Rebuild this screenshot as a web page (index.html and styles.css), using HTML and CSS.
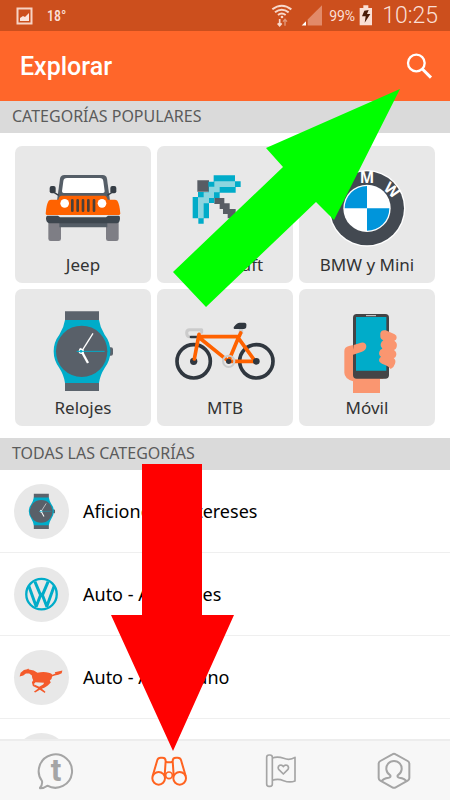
FILE: index.html
```
<!DOCTYPE html>
<html lang="es">
<head>
<meta charset="utf-8">
<meta name="viewport" content="width=device-width, initial-scale=1">
<title>Explorar</title>
<link rel="stylesheet" href="styles.css">
</head>
<body>
<div class="app">
  <div class="status">
    <svg class="status-photo" viewBox="0 0 17 18"><path d="M1.500 1.500h14v15h-14z" fill="none" stroke="#f7d3c5" stroke-width="2"/><path d="M4 14v-3l3-2 2 1 4-4v8z" fill="#fbe4dc"/></svg>
    <span class="temp">18°</span>
    <span class="spacer"></span>
    <svg class="status-icon" viewBox="144 9 66 69" fill="none" stroke="#f8d8cb" stroke-width="6"><path d="M148 25q28-22 57 0M156 34q20-16 41 0M165 42q11-9 23 0"/><circle cx="177" cy="48" r="4" fill="#f8d8cb" stroke="none"/><path d="M170 54v20M164 67l6 7 6-7" stroke-width="5"/><path d="M186 74V55m-6 7 6-7 6 7" stroke="#e39a7c" stroke-width="4"/></svg>
    <svg class="status-icon signal" viewBox="234 12 66 66"><path d="M297 14v61h-43V57z" fill="#e28a69"/><path d="M249 62v13h-13z" fill="#fff"/></svg>
    <span class="percent">99%</span>
    <svg class="battery" viewBox="411 13 42 63"><path d="M424 14h15v8h11v52h-37V22h11z" fill="#fadfd5"/><path d="m427 30 13-2-5 12h10l-17 26 3-19h-11z" fill="#4a1b08"/></svg>
    <time class="clock">10:25</time>
  </div>
  <header class="bar">
    <h1>Explorar</h1>
    <button class="search" aria-label="Buscar"><svg viewBox="540 153 90 90" fill="none" stroke="#fff"><circle cx="574" cy="189" r="25" stroke-width="7"/><path d="m592 207 26 26" stroke-width="9"/></svg></button>
  </header>
  <main class="content">
    <h2>CATEGORÍAS POPULARES</h2>
    <div class="grid">
      <a class="tile" href="#">
        <svg viewBox="45 18 408 318">
          <rect x="145" y="235" width="38" height="68" rx="7" fill="#7e7e85"/><rect x="318" y="235" width="38" height="68" rx="7" fill="#7e7e85"/>
          <path d="M178 245h144v17H178z" fill="#545d66"/>
          <path d="M171 182l9-66q2-11 13-11h115q11 0 13 11l9 66z" fill="#555e67"/>
          <path d="M186 154l4-30q1-10 11-10h98q10 0 11 10l4 30q0 5-5 5H191q-5 0-5-5z" fill="#fff"/>
          <rect x="149" y="138" width="18" height="22" rx="6" fill="#353d45"/><rect x="331" y="138" width="18" height="22" rx="6" fill="#353d45"/><path d="M163 158l13 8M335 158l-13 8" stroke="#353d45" stroke-width="4"/>
          <path d="M137 221q2-28 9-39 3-3 8-3h21q3-12 10-12h128q7 0 10 12h21q5 0 8 3 7 11 9 39-1 4-5 4H142q-5 0-5-4z" fill="#ff6200"/>
          <circle cx="194" cy="190" r="13" fill="#fff"/><circle cx="306" cy="190" r="13" fill="#fff"/>
          <path d="M217 181v31M233 181v31M249 181v31M265 181v31M282 181v31" stroke="#4c4038" stroke-width="8" stroke-linecap="round"/>
          <path d="M142 227h32l6 5h138l6-5h32q4 0 4 7 0 14-9 16H147q-9-3-9-15 0-8 4-8z" fill="#3d464e"/>
        </svg>
        <span>Jeep</span>
      </a>
      <a class="tile" href="#">
        <svg viewBox="6 18 408 318">
          <path d="M127 121h35v34h-35zM178 174h30v16h16v17h18v28h-24v-13h-14v-15h-10v-15h-16z" fill="#585d64"/>
          <path d="M176 106h64v18h17v17h-15v17h-48v16h-16v15h-16v46h-16v16h-16v-16h-17v-64h16v-15h32v-16h-1v-15h16z" fill="#00acc9"/>
          <path d="M178 124h62v17h-46v16h-17v17h-15v16h-16v45h-17v-63h17v-15h16v-17h16z" fill="#8bd5df"/>
        </svg>
        <span>Minecraft</span>
      </a>
      <a class="tile" href="#">
        <svg viewBox="12 18 408 318">
          <circle cx="216" cy="205" r="115" fill="#fff"/><circle cx="216" cy="205" r="111" fill="#434951"/><circle cx="216" cy="205" r="71" fill="#fff"/>
          <path d="M216 205v-67a67 67 0 0 0-67 67zM216 205v67a67 67 0 0 0 67-67z" fill="#0095db"/>
          <g class="badge-text" text-anchor="middle"><text x="216" y="130">M</text><text transform="translate(280 162) rotate(41)">W</text><text transform="translate(152 162) rotate(-41)">B</text></g>
        </svg>
        <span>BMW y Mini</span>
      </a>
      <a class="tile" href="#">
        <svg viewBox="45 12 408 318">
          <g id="watch"><path d="M195 79h102v30H195zM195 288h102v30H195zM325 187h8q6 0 6 6v13q0 6-6 6h-8z" fill="#5b636c"/>
          <path d="M195 105h102q3 22 17 44 17 22 17 50t-17 50q-14 22-17 45H195q-3-23-17-45-17-22-17-50t17-50q14-22 17-44z" fill="#00acc9"/><circle cx="245" cy="199" r="77" fill="#596069"/>
          <path d="M245 199l34-54" stroke="#fff" stroke-width="4"/><path d="M240 190l24 44" stroke="#fff" stroke-width="7"/><circle cx="244" cy="199" r="8" fill="#fff"/><path d="M230 199h84" stroke="#00acc9" stroke-width="3"/><circle cx="243" cy="199" r="4" fill="#00acc9"/></g>
        </svg>
        <span>Relojes</span>
      </a>
      <a class="tile" href="#">
        <svg viewBox="6 12 408 318" fill="none" stroke-linecap="round" stroke-linejoin="round">
          <g stroke="#30373f" stroke-width="11"><circle cx="116" cy="229" r="50"/><circle cx="304" cy="229" r="50"/></g>
          <circle cx="116" cy="229" r="11" fill="#30373f"/>
          <path d="M140 142v-8h-36q-9 0-9 9 0 12 10 12" stroke="#cbcbcb" stroke-width="9"/><path d="M108 156h18" stroke="#30373f" stroke-width="8"/>
          <path d="M258 146v-16" stroke="#cbcbcb" stroke-width="13" stroke-linecap="butt"/>
          <path d="M118 222l14-74M134 155h116M134 159l87 70h80l-54-74M221 228l26-62 10-22" stroke="#ff6200" stroke-width="11"/>
          <path d="M237 125q-4 7 5 7h24q8 0 8-8 2-11-6-11h-14q-8 0-17 12z" fill="#30373f"/>
          <circle cx="221" cy="229" r="17" stroke="#cbcbcb" stroke-width="6"/><circle cx="221" cy="229" r="8" fill="#30373f"/><circle cx="304" cy="229" r="10" fill="#30373f"/>
        </svg>
        <span>MTB</span>
      </a>
      <a class="tile" href="#">
        <svg viewBox="12 12 408 318">
          <path d="M184 178l-22 5q-14 3-14 15v65q0 17 26 26v35h81v-42h10V180z" fill="#fa9670"/>
          <rect x="174" y="87" width="108" height="194" rx="11" fill="#444446"/><path d="M183 96h91v161h-91z" fill="#00acc9"/><path d="M213 92h30" stroke="#d8d8d8" stroke-width="3"/>
          <path d="M176 180l22-7q14-3 16 10 0 13-13 17l-29 10z" fill="#fa9670"/>
          <path d="M256 145q3-12 16-9l27 12q7 3 6 11-1 7-7 8 10 6 7 19-2 7-8 9 10 7 6 18-2 6-7 6 8 7 4 17-3 11-13 16-6-8-15-11-13-4-18-10-5-9 4-16-8-6-5-15 2-7 9-9-7-6-5-14 2-8 8-11-10-5-9-13z" fill="#fa9670"/>
        </svg>
        <span>Móvil</span>
      </a>
    </div>
    <h2>TODAS LAS CATEGORÍAS</h2>
    <ul class="list">
      <li><a href="#"><svg viewBox="41 163 166 166"><g transform="translate(14 157) scale(.445)"><use href="#watch"/></g></svg><span>Aficiones e Intereses</span></a></li>
      <li><a href="#"><svg viewBox="41 412 166 166" fill="none" stroke="#00acc9"><circle cx="124" cy="494" r="46" stroke-width="7"/><path d="M86 470l22 61 13-34h6l13 34 22-61M104 456l16 38h8l16-38" stroke-width="9" stroke-linejoin="bevel"/></svg><span>Auto - Alemanes</span></a></li>
      <li><a href="#"><svg viewBox="41 90 166 166"><path d="M58 170l3-11 10-9 10-2 3-2 2 3q16 1 26 10 18-5 34 0 8 2 11 6l9-4-2-4 10-2 13-3-2 8-10 5-11 2-8 3q0 8-7 12l3 6-9 9-9 6-9 4 11 9-2 4-15-10-14 8-4-2 13-10-13-6 3-5 13 6 12-7 3-5-13-1-13-1-4 4 1 10-5-2-3-12 4-6q-4-6-4-14l-8-6-10 0-8 6z" fill="#f45a2b"/></svg><span>Auto - Americano</span></a></li>
      <li><a href="#" aria-label="Auto"><svg viewBox="0 0 55 55"></svg></a></li>
    </ul>
  </main>
  <nav class="nav">
    <a href="#" aria-label="Tapatalk"><svg viewBox="108 390 120 120"><path d="M120 500q8-8 6-20a50 50 0 1 1 16 14q-10 8-22 8z" fill="none" stroke="#a5a5a5" stroke-width="6" stroke-linejoin="round"/><text class="logo-t" x="168" y="480" text-anchor="middle">t</text></svg></a>
    <a href="#" aria-label="Explorar" class="active"><svg viewBox="446 390 120 120" fill="none" stroke="#ff6320" stroke-width="6"><circle cx="475" cy="472" r="19"/><circle cx="538" cy="472" r="19"/><circle cx="506" cy="463" r="10" stroke-width="5"/><path d="M457 465l14-48q2-7 10-7h5q10 0 10 10l-3 44M556 465l-14-48q-2-7-10-7h-5q-10 0-10 10l3 44M496 421l5 3h11l5-3"/></svg></a>
    <a href="#" aria-label="Grupos"><svg viewBox="109 390 120 120" fill="none" stroke="#a5a5a5" stroke-width="5" stroke-linejoin="round"><rect x="126" y="402" width="17" height="94" rx="7"/><path d="M143 411q16-6 34 1 19 7 34-3v71q-16 6-34-1-17-7-34-1M176 459l-14-14q-4-8 3-12 7-3 11 4 4-7 11-4 7 4 3 12z"/></svg></a>
    <a href="#" aria-label="Perfil"><svg viewBox="446 390 120 120" fill="none" stroke="#a5a5a5" stroke-width="6" stroke-linejoin="round"><path d="M501 400q5-3 10 0l36 20q5 3 5 8v43q0 5-5 8l-36 20q-5 3-10 0l-36-20q-5-3-5-8v-43q0-5 5-8z"/><path d="M468 482q5-10 22-12 7-1 5-7a23 23 0 1 1 22 0q-2 6 5 7 17 2 22 12"/></svg></a>
  </nav>
  <svg class="arrows" viewBox="0 0 450 800" preserveAspectRatio="xMidYMin meet" aria-hidden="true">
    <path d="M400 89L266 148l17 19L173 272l33 35 110-105 18 18z" fill="#0f0"/>
    <path d="M142 464h60v151h32l-61 136-62-136h31z" fill="#f00"/>
  </svg>
</div>
</body>
</html>
```
FILE: styles.css
```
* { box-sizing: border-box; }
body { margin: 0; background: #fff; color: #000; font-family: "Noto Sans", sans-serif; }
a { color: inherit; text-decoration: none; }
svg { display: block; }
.app { position: relative; display: flex; flex-direction: column; height: 100vh; overflow: hidden; }
.status { display: flex; align-items: center; flex: none; height: 31px; padding: 0 12px 0 16px; background: #cc4f1d; color: #fadfd5; font-family: Roboto, sans-serif; }
.status-photo { width: 17px; height: 18px; }
.temp { margin-left: 14px; font: 500 14px "Roboto Condensed", Roboto, sans-serif; }
.spacer { flex: 1; }
.status-icon { width: 22px; height: 23px; }
.signal { margin: 0 6px 0 8px; }
.percent { font-size: 14px; }
.battery { width: 14px; height: 21px; margin: 0 9px 0 4px; }
.clock { font-size: 23px; font-weight: 300; }
.bar { display: flex; align-items: center; justify-content: space-between; flex: none; height: 70px; padding: 0 15px 0 20px; background: #ff662a; color: #fff; }
h1 { margin: 0; padding-top: 2px; font: 500 25px/30px Roboto, sans-serif; }
.search { padding: 0; border: 0; background: none; }
.search svg { width: 30px; height: 30px; }
.content { flex: 1; min-height: 0; overflow: hidden; }
h2 { height: 32px; margin: 0; padding: 0 12px; background: #dadada; color: #5b5b5b; font: 400 16px/30px "Noto Sans", sans-serif; }
.grid { display: grid; grid-template-columns: repeat(3, 1fr); gap: 6px; padding: 13px 15px 12px; }
.tile { display: flex; flex-direction: column; padding-bottom: 5px; border-radius: 7px; background: #e8e8e8; color: #333; text-align: center; font-size: 17px; line-height: 26px; }
.tile svg { width: 100%; }
.badge-text { fill: #fff; font: 700 46px "Noto Sans", sans-serif; }
.list { margin: 0; padding: 0; list-style: none; }
.list a { display: flex; align-items: center; gap: 14px; height: 83px; padding: 0 14px; border-bottom: 1px solid #efefef; font-size: 18px; }
.list svg { width: 55px; height: 55px; border-radius: 50%; background: #e8e8e8; }
.nav { display: grid; grid-template-columns: repeat(4, 1fr); align-items: center; justify-items: center; flex: none; height: 61px; border-top: 2px solid #ededed; background: #f7f7f7; }
.nav svg { width: 40px; height: 40px; }
.logo-t { fill: #a5a5a5; font: 700 94px Roboto, sans-serif; }
.arrows { position: absolute; top: 0; left: 0; width: 100%; height: 100%; pointer-events: none; }
```
